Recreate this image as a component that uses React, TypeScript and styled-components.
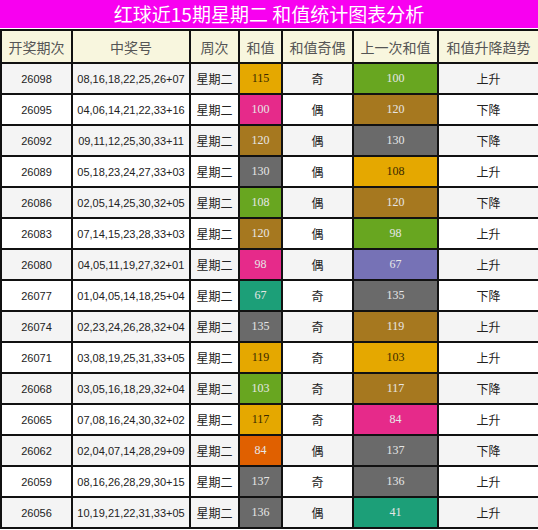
import React from 'react';
import styled, { createGlobalStyle } from 'styled-components';

const GlobalStyle = createGlobalStyle`
  body {
    margin: 0;
    background: #fff;
    font-family: "Noto Sans CJK SC", "Liberation Sans", sans-serif;
  }
`;

const Page = styled.div`
  width: 538px;
  overflow: hidden;
`;

const Title = styled.div`
  height: 28px;
  background: #f800f0;
  color: #fff;
  font-size: 19px;
  line-height: 28px;
  text-align: center;
  white-space: nowrap;
`;

const Table = styled.table`
  width: 538px;
  table-layout: fixed;
  border-collapse: collapse;
  margin-top: 1px;
`;

const HeadCell = styled.th`
  height: 31px;
  padding: 0;
  border: 2px solid #111;
  background: #f8f6de;
  color: #555;
  font-size: 14px;
  font-weight: normal;
  text-align: center;
  white-space: nowrap;
`;

const Row = styled.tr<{ $odd: boolean }>`
  background: ${(p) => (p.$odd ? '#f4f4f4' : '#fff')};
`;

const Cell = styled.td<{ $kind?: 'num' | 'cn' }>`
  height: 29px;
  padding: 0;
  border: 2px solid #111;
  text-align: center;
  white-space: nowrap;
  color: #222;
  font-family: ${(p) =>
    p.$kind === 'num'
      ? '"Liberation Sans", sans-serif'
      : '"Noto Sans CJK SC", sans-serif'};
  font-size: ${(p) => (p.$kind === 'num' ? '11px' : '12px')};
`;

const palette: Record<string, string> = {
  gold: '#e5a800',
  pink: '#e62a8a',
  brown: '#a6781f',
  gray: '#6a6a6a',
  green: '#68a620',
  teal: '#1c9f78',
  purple: '#7672b6',
  orange: '#e06000',
};

const ValueCell = styled.td<{ $tone: string }>`
  height: 29px;
  padding: 0;
  border: 2px solid #111;
  text-align: center;
  font-family: "Liberation Serif", serif;
  font-size: 12px;
  background: ${(p) => palette[p.$tone]};
  color: ${(p) => (p.$tone === 'gold' ? '#3a2a00' : '#e6e6e6')};
`;

type Draw = {
  issue: string;
  balls: string;
  sum: number;
  sumTone: string;
  parity: string;
  prev: number;
  prevTone: string;
  trend: string;
};

const draws: Draw[] = [
  { issue: '26098', balls: '08,16,18,22,25,26+07', sum: 115, sumTone: 'gold', parity: '奇', prev: 100, prevTone: 'green', trend: '上升' },
  { issue: '26095', balls: '04,06,14,21,22,33+16', sum: 100, sumTone: 'pink', parity: '偶', prev: 120, prevTone: 'brown', trend: '下降' },
  { issue: '26092', balls: '09,11,12,25,30,33+11', sum: 120, sumTone: 'brown', parity: '偶', prev: 130, prevTone: 'gray', trend: '下降' },
  { issue: '26089', balls: '05,18,23,24,27,33+03', sum: 130, sumTone: 'gray', parity: '偶', prev: 108, prevTone: 'gold', trend: '上升' },
  { issue: '26086', balls: '02,05,14,25,30,32+05', sum: 108, sumTone: 'green', parity: '偶', prev: 120, prevTone: 'brown', trend: '下降' },
  { issue: '26083', balls: '07,14,15,23,28,33+03', sum: 120, sumTone: 'brown', parity: '偶', prev: 98, prevTone: 'green', trend: '上升' },
  { issue: '26080', balls: '04,05,11,19,27,32+01', sum: 98, sumTone: 'pink', parity: '偶', prev: 67, prevTone: 'purple', trend: '上升' },
  { issue: '26077', balls: '01,04,05,14,18,25+04', sum: 67, sumTone: 'teal', parity: '奇', prev: 135, prevTone: 'gray', trend: '下降' },
  { issue: '26074', balls: '02,23,24,26,28,32+04', sum: 135, sumTone: 'gray', parity: '奇', prev: 119, prevTone: 'brown', trend: '上升' },
  { issue: '26071', balls: '03,08,19,25,31,33+05', sum: 119, sumTone: 'gold', parity: '奇', prev: 103, prevTone: 'gold', trend: '上升' },
  { issue: '26068', balls: '03,05,16,18,29,32+04', sum: 103, sumTone: 'green', parity: '奇', prev: 117, prevTone: 'brown', trend: '下降' },
  { issue: '26065', balls: '07,08,16,24,30,32+02', sum: 117, sumTone: 'gold', parity: '奇', prev: 84, prevTone: 'pink', trend: '上升' },
  { issue: '26062', balls: '02,04,07,14,28,29+09', sum: 84, sumTone: 'orange', parity: '偶', prev: 137, prevTone: 'gray', trend: '下降' },
  { issue: '26059', balls: '08,16,26,28,29,30+15', sum: 137, sumTone: 'gray', parity: '奇', prev: 136, prevTone: 'gray', trend: '上升' },
  { issue: '26056', balls: '10,19,21,22,31,33+05', sum: 136, sumTone: 'gray', parity: '偶', prev: 41, prevTone: 'teal', trend: '上升' },
];

const columns = [
  { label: '开奖期次', width: 71 },
  { label: '中奖号', width: 118 },
  { label: '周次', width: 49 },
  { label: '和值', width: 43 },
  { label: '和值奇偶', width: 71 },
  { label: '上一次和值', width: 85 },
  { label: '和值升降趋势', width: 101 },
];

const App: React.FC = () => {
  return (
    <Page>
      <GlobalStyle />
      <Title>红球近15期星期二 和值统计图表分析</Title>
      <Table>
        <colgroup>
          {columns.map((c) => (
            <col key={c.label} style={{ width: c.width }} />
          ))}
        </colgroup>
        <thead>
          <tr>
            {columns.map((c) => (
              <HeadCell key={c.label}>{c.label}</HeadCell>
            ))}
          </tr>
        </thead>
        <tbody>
          {draws.map((d, i) => (
            <Row key={d.issue} $odd={i % 2 === 0}>
              <Cell $kind="num">{d.issue}</Cell>
              <Cell $kind="num">{d.balls}</Cell>
              <Cell>星期二</Cell>
              <ValueCell $tone={d.sumTone}>{d.sum}</ValueCell>
              <Cell>{d.parity}</Cell>
              <ValueCell $tone={d.prevTone}>{d.prev}</ValueCell>
              <Cell>{d.trend}</Cell>
            </Row>
          ))}
        </tbody>
      </Table>
    </Page>
  );
};

export default App;
